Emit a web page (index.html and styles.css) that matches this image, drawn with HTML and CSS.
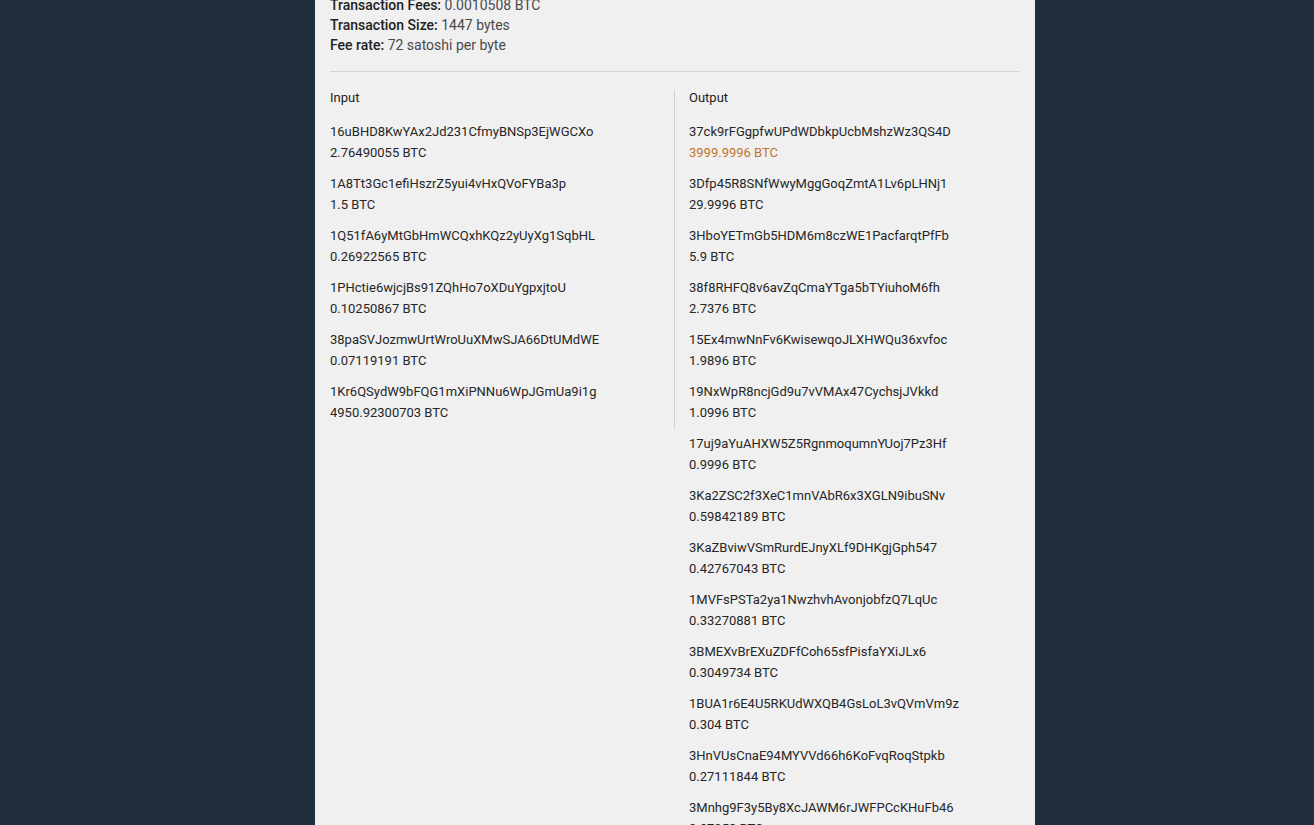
FILE: index.html
```html
<!DOCTYPE html>
<html>
<head>
<meta charset="utf-8">
<link rel="stylesheet" href="styles.css">
</head>
<body>
<div class="page">
  <main class="panel">
    <section class="summary">
      <div class="line"><span class="label">Transaction Fees:</span> 0.0010508 BTC</div>
      <div class="line"><span class="label">Transaction Size:</span> 1447 bytes</div>
      <div class="line"><span class="label">Fee rate:</span> 72 satoshi per byte</div>
    </section>
    <hr class="divider">
    <section class="io">
      <div class="col col-in">
        <div class="col-title">Input</div>
        <div class="entry"><div>16uBHD8KwYAx2Jd231CfmyBNSp3EjWGCXo</div><div>2.76490055 BTC</div></div>
        <div class="entry"><div>1A8Tt3Gc1efiHszrZ5yui4vHxQVoFYBa3p</div><div>1.5 BTC</div></div>
        <div class="entry"><div>1Q51fA6yMtGbHmWCQxhKQz2yUyXg1SqbHL</div><div>0.26922565 BTC</div></div>
        <div class="entry"><div>1PHctie6wjcjBs91ZQhHo7oXDuYgpxjtoU</div><div>0.10250867 BTC</div></div>
        <div class="entry"><div>38paSVJozmwUrtWroUuXMwSJA66DtUMdWE</div><div>0.07119191 BTC</div></div>
        <div class="entry"><div>1Kr6QSydW9bFQG1mXiPNNu6WpJGmUa9i1g</div><div>4950.92300703 BTC</div></div>
      </div>
      <div class="col col-out">
        <div class="col-title">Output</div>
        <div class="entry"><div>37ck9rFGgpfwUPdWDbkpUcbMshzWz3QS4D</div><div class="hl">3999.9996 BTC</div></div>
        <div class="entry"><div>3Dfp45R8SNfWwyMggGoqZmtA1Lv6pLHNj1</div><div>29.9996 BTC</div></div>
        <div class="entry"><div>3HboYETmGb5HDM6m8czWE1PacfarqtPfFb</div><div>5.9 BTC</div></div>
        <div class="entry"><div>38f8RHFQ8v6avZqCmaYTga5bTYiuhoM6fh</div><div>2.7376 BTC</div></div>
        <div class="entry"><div>15Ex4mwNnFv6KwisewqoJLXHWQu36xvfoc</div><div>1.9896 BTC</div></div>
        <div class="entry"><div>19NxWpR8ncjGd9u7vVMAx47CychsjJVkkd</div><div>1.0996 BTC</div></div>
        <div class="entry"><div>17uj9aYuAHXW5Z5RgnmoqumnYUoj7Pz3Hf</div><div>0.9996 BTC</div></div>
        <div class="entry"><div>3Ka2ZSC2f3XeC1mnVAbR6x3XGLN9ibuSNv</div><div>0.59842189 BTC</div></div>
        <div class="entry"><div>3KaZBviwVSmRurdEJnyXLf9DHKgjGph547</div><div>0.42767043 BTC</div></div>
        <div class="entry"><div>1MVFsPSTa2ya1NwzhvhAvonjobfzQ7LqUc</div><div>0.33270881 BTC</div></div>
        <div class="entry"><div>3BMEXvBrEXuZDFfCoh65sfPisfaYXiJLx6</div><div>0.3049734 BTC</div></div>
        <div class="entry"><div>1BUA1r6E4U5RKUdWXQB4GsLoL3vQVmVm9z</div><div>0.304 BTC</div></div>
        <div class="entry"><div>3HnVUsCnaE94MYVVd66h6KoFvqRoqStpkb</div><div>0.27111844 BTC</div></div>
        <div class="entry"><div>3Mnhg9F3y5By8XcJAWM6rJWFPCcKHuFb46</div><div>0.27053 BTC</div></div>
      </div>
    </section>
  </main>
</div>
</body>
</html>
```

FILE: styles.css
```css
html, body {
  margin: 0;
  padding: 0;
  height: 100%;
  overflow: hidden;
}
body {
  background: #1f2d3c;
  font-family: Roboto, "Liberation Sans", sans-serif;
  font-size: 14px;
  color: #333333;
}
.page {
  display: grid;
  grid-template-columns: 315px 720px 1fr;
  min-height: 100%;
}
.panel {
  grid-column: 2;
  background: #f0f0f0;
  padding: 0 15px;
  overflow: hidden;
}
.summary {
  margin-top: -5px;
  line-height: 20px;
  color: #4a4a4a;
}
.label {
  font-weight: 500;
  color: #222222;
}
.divider {
  border: 0;
  border-top: 1px solid #d4d4d4;
  margin: 16px 0 18px 0;
  height: 0;
}
.io {
  display: grid;
  grid-template-columns: 1fr 1fr;
  margin: 0 -15px;
  align-items: start;
  font-size: 13px;
}
.col {
  padding: 0 15px;
  line-height: 21px;
}
.col-in {
  border-right: 1px solid #d0d0d0;
  padding-bottom: 6px;
}
.col-out {
  padding-left: 14px;
}
.col-title {
  line-height: 15px;
  color: #222222;
  margin-bottom: 16px;
}
.entry {
  margin-bottom: 10px;
  color: #262626;
}
.col-in .entry:last-child {
  margin-bottom: 0;
}
.hl {
  color: #c0742a;
}
```
